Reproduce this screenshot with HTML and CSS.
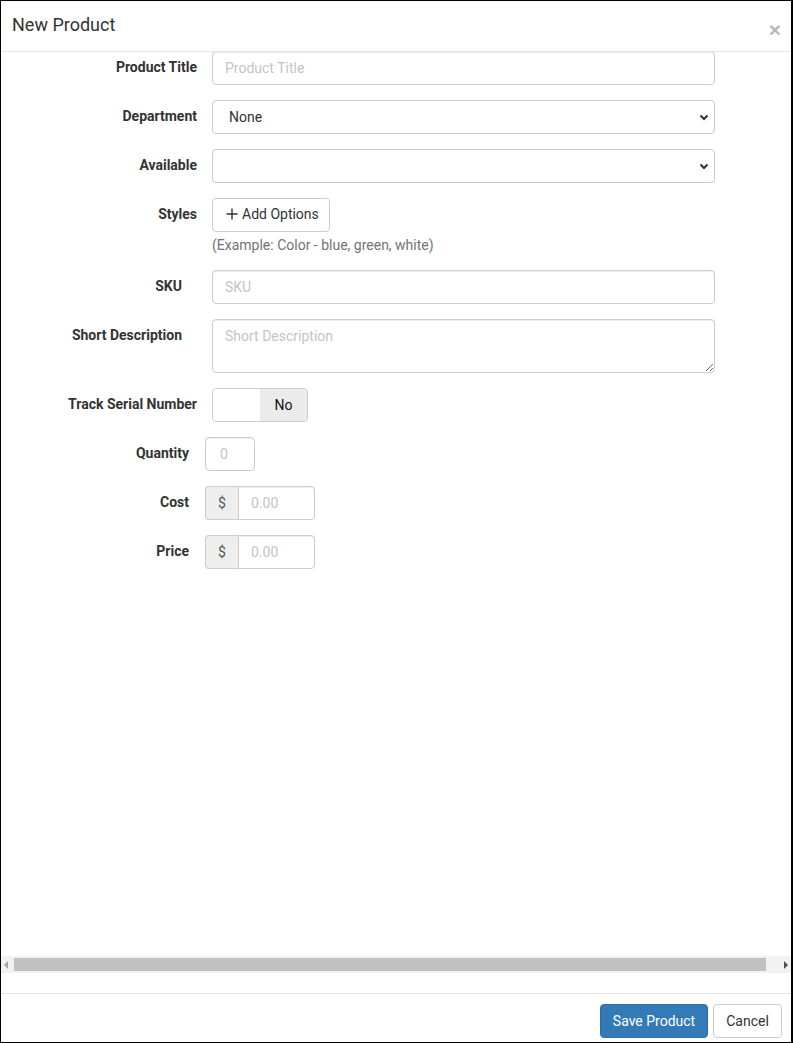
FILE: index.html
```html
<!DOCTYPE html>
<html lang="en">
<head>
<meta charset="utf-8">
<title>New Product</title>
<link rel="stylesheet" href="styles.css">
</head>
<body>
<div class="modal">
  <header class="modal-header">
    <h4 class="modal-title">New Product</h4>
    <button class="close" type="button">×</button>
  </header>
  <main class="modal-body">
    <form class="form">
      <div class="row">
        <label class="lbl">Product Title</label>
        <div class="field"><input class="control" type="text" placeholder="Product Title"></div>
      </div>
      <div class="row">
        <label class="lbl">Department</label>
        <div class="field">
          <div class="select">
            <span class="select-text">None</span>
            <svg class="chev" width="10" height="7" viewBox="0 0 10 7"><path d="M1.5 1.5 L5 5 L8.5 1.5" fill="none" stroke="#333" stroke-width="2"/></svg>
          </div>
        </div>
      </div>
      <div class="row">
        <label class="lbl">Available</label>
        <div class="field">
          <div class="select">
            <span class="select-text"></span>
            <svg class="chev" width="10" height="7" viewBox="0 0 10 7"><path d="M1.5 1.5 L5 5 L8.5 1.5" fill="none" stroke="#333" stroke-width="2"/></svg>
          </div>
        </div>
      </div>
      <div class="row">
        <label class="lbl">Styles</label>
        <div class="field">
          <button class="btn btn-default btn-add" type="button">
            <svg width="12" height="12" viewBox="0 0 12 12"><path d="M6 0.5 V11.5 M0.5 6 H11.5" stroke="#333" stroke-width="1.4"/></svg>
            <span>Add Options</span>
          </button>
          <p class="help">(Example: Color - blue, green, white)</p>
        </div>
      </div>
      <div class="row">
        <label class="lbl inset">SKU</label>
        <div class="field"><input class="control" type="text" placeholder="SKU"></div>
      </div>
      <div class="row">
        <label class="lbl inset">Short Description</label>
        <div class="field"><textarea class="control area" placeholder="Short Description"></textarea></div>
      </div>
      <div class="row">
        <label class="lbl">Track Serial Number</label>
        <div class="field">
          <div class="toggle"><span class="toggle-on"></span><span class="toggle-off">No</span></div>
        </div>
      </div>
      <div class="row narrow">
        <label class="lbl">Quantity</label>
        <div class="field"><input class="control qty" type="text" placeholder="0"></div>
      </div>
      <div class="row narrow">
        <label class="lbl">Cost</label>
        <div class="field">
          <div class="group"><span class="addon">$</span><input class="control money" type="text" placeholder="0.00"></div>
        </div>
      </div>
      <div class="row narrow">
        <label class="lbl">Price</label>
        <div class="field">
          <div class="group"><span class="addon">$</span><input class="control money" type="text" placeholder="0.00"></div>
        </div>
      </div>
    </form>
    <div class="hscroll">
      <span class="sb-btn sb-left"><svg width="5" height="8" viewBox="0 0 5 8"><path d="M4 0 V8 L0 4 Z" fill="#a3a3a3"/></svg></span>
      <span class="sb-thumb"></span>
      <span class="sb-fill"></span>
      <span class="sb-btn sb-right"><svg width="5" height="8" viewBox="0 0 5 8"><path d="M0 0 V8 L4 4 Z" fill="#505050"/></svg></span>
    </div>
  </main>
  <footer class="modal-footer">
    <button class="btn btn-primary" type="button">Save Product</button>
    <button class="btn btn-default btn-cancel" type="button">Cancel</button>
  </footer>
</div>
</body>
</html>
```

FILE: styles.css
```css
* { box-sizing: border-box; }
html, body { margin: 0; padding: 0; background: #fff; }
body {
  font-family: Roboto, "Liberation Sans", Arial, sans-serif;
  font-size: 14px;
  line-height: 20px;
  color: #333;
}
.modal {
  width: 793px;
  height: 1043px;
  border: 1px solid #000;
  border-right-width: 2px;
  display: flex;
  flex-direction: column;
  background: #fff;
  overflow: hidden;
}
.modal-header {
  height: 51px;
  flex: none;
  border-bottom: 1px solid #e5e5e5;
  display: flex;
  align-items: center;
  justify-content: space-between;
  padding: 0 10px 0 11px;
  position: relative;
  z-index: 1;
}
.modal-title {
  margin: -2px 0 0;
  font-size: 18px;
  font-weight: 400;
  line-height: 20px;
  color: #333;
}
.close {
  border: 0;
  background: none;
  padding: 0;
  font-family: "Liberation Sans", Arial, sans-serif;
  font-size: 21px;
  font-weight: 700;
  line-height: 1;
  color: #b8b8b8;
  margin-top: 6px;
}
.modal-body {
  flex: 1;
  display: flex;
  flex-direction: column;
  padding-bottom: 20px;
  min-height: 0;
}
.form {
  flex: 1;
  margin: -1px 0 0;
}
.row {
  display: grid;
  grid-template-columns: 196px 503px;
  column-gap: 15px;
  margin-bottom: 15px;
}
.row.narrow {
  grid-template-columns: 188px auto;
  column-gap: 16px;
}
.lbl {
  text-align: right;
  font-weight: 700;
  padding-top: 6px;
  line-height: 20px;
  color: #333;
}
.lbl.inset { padding-right: 15px; }
.field { min-width: 0; }
.control {
  display: block;
  width: 100%;
  height: 34px;
  padding: 6px 12px;
  font-family: inherit;
  font-size: 14px;
  line-height: 20px;
  color: #555;
  background: #fff;
  border: 1px solid #ccc;
  border-radius: 4px;
  box-shadow: inset 0 1px 1px rgba(0,0,0,.075);
  outline: none;
  margin: 0;
}
.control::placeholder { color: #c4c4c4; opacity: 1; }
.area {
  height: 54px;
  resize: both;
  max-width: 503px;
}
.select {
  height: 34px;
  border: 1px solid #ccc;
  border-radius: 4px;
  display: flex;
  align-items: center;
  justify-content: space-between;
  padding: 0 5px 0 16px;
  color: #333;
  background: #fff;
}
.chev { display: block; }
.btn {
  display: inline-flex;
  align-items: center;
  height: 34px;
  padding: 6px 12px;
  font-family: inherit;
  font-size: 14px;
  line-height: 20px;
  white-space: nowrap;
  border-radius: 4px;
  border: 1px solid #ccc;
  background: #fff;
  color: #333;
  cursor: pointer;
}
.btn-add {
  width: 118px;
  padding: 5px 0 7px 13px;
  gap: 4px;
}
.help {
  margin: 3px 0 0;
  color: #737373;
  line-height: 20px;
}
.toggle {
  display: flex;
  width: 96px;
  height: 34px;
  border: 1px solid #ccc;
  border-radius: 4px;
  overflow: hidden;
}
.toggle-on { width: 47px; background: #fff; }
.toggle-off {
  flex: 1;
  background: #ebebeb;
  color: #111;
  display: flex;
  align-items: center;
  justify-content: center;
}
.qty { width: 50px; padding: 6px 14px; }
.group {
  display: flex;
  width: 110px;
}
.addon {
  width: 33px;
  height: 34px;
  flex: none;
  background: #eee;
  border: 1px solid #ccc;
  border-right: 0;
  border-radius: 4px 0 0 4px;
  display: flex;
  align-items: center;
  justify-content: center;
  color: #555;
}
.money {
  border-radius: 0 4px 4px 0;
  padding-left: 12px;
}
.hscroll {
  height: 17px;
  flex: none;
  background: #f1f1f1;
  display: flex;
  align-items: center;
}
.sb-btn {
  width: 13px;
  height: 17px;
  display: flex;
  align-items: center;
  justify-content: center;
  flex: none;
}
.sb-left { padding-right: 2px; }
.sb-thumb {
  width: 752px;
  height: 13px;
  background: #c1c1c1;
  flex: none;
}
.sb-fill { flex: 1; }
.sb-right { width: 12px; padding-left: 3px; }
.modal-footer {
  flex: none;
  border-top: 1px solid #e5e5e5;
  padding: 10px 9px 4px;
  display: flex;
  justify-content: flex-end;
  gap: 5px;
}
.btn-primary {
  background: #337ab7;
  border-color: #2e6da4;
  color: #fff;
  width: 108px;
  padding: 6px 0;
  justify-content: center;
}
.btn-cancel {
  width: 69px;
  padding: 6px 0;
  justify-content: center;
}
```
